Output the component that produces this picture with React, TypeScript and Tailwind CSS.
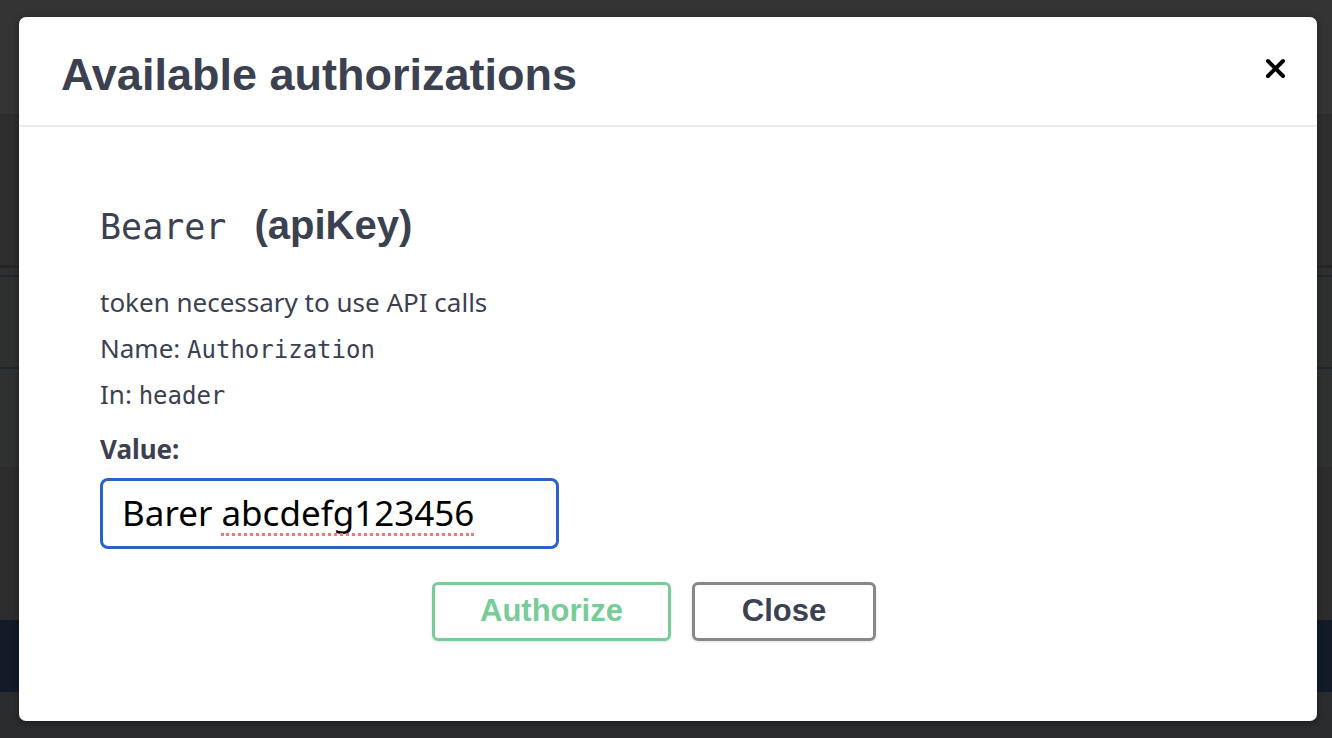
import React from "react";

const mono = { fontFamily: '"DejaVu Sans Mono", monospace' };
const noto = { fontFamily: '"Noto Sans", "Liberation Sans", sans-serif' };

export default function App() {
  return (
    <div className="relative w-[1332px] h-[738px] overflow-hidden bg-[#2d2d2d]" style={{ fontFamily: '"Liberation Sans", Arial, sans-serif' }}>
      {/* faded page behind overlay */}
      <div className="flex flex-col">
        <div className="h-[114px] bg-[#333333]" />
        <div className="h-[1px] bg-[#2a2a2a]" />
        <div className="h-[150px] bg-[#2e2e2e]" />
        <div className="h-[3px] bg-[#262626]" />
        <div className="h-[7px] bg-[#2f2f2f]" />
        <div className="h-[2px] bg-[#1d2836]" />
        <div className="h-[90px] bg-[#2e2f2f]" />
        <div className="h-[2px] bg-[#1d2836]" />
        <div className="h-[98px] bg-[#2f3030]" />
        <div className="h-[1px] bg-[#292929]" />
        <div className="h-[152px] bg-[#2d2d2d]" />
        <div className="h-[72px] bg-[#131b28]" />
        <div className="h-[46px] bg-[#2b2c2d]" />
      </div>

      {/* modal */}
      <div className="absolute left-[19px] top-[17px] w-[1298px] h-[704px] bg-white rounded-[7px] shadow-[0_2px_6px_rgba(0,0,0,0.35)] flex flex-col">
        <div className="h-[110px] flex items-center justify-between pl-[42px] pr-[31px] border-b-2 border-[#ebebeb]">
          <h3 className="text-[45px] font-bold text-[#3b4151] leading-none pt-[6px]">Available authorizations</h3>
          <svg width="21" height="21" viewBox="0 0 21 21" className="mb-[6px]">
            <path d="M3 3 L18 18 M18 3 L3 18" stroke="#000" strokeWidth="4" strokeLinecap="round" />
          </svg>
        </div>
        <div className="flex flex-col pl-[81px] pt-[78px]">
          <h4 className="flex items-baseline text-[#3b4151] leading-none">
            <code className="text-[35px]" style={mono}>Bearer</code>
            <span className="text-[40px] font-bold ml-[28px]">(apiKey)</span>
          </h4>
          <div className="mt-[45px] flex flex-col gap-[22px] text-[26px] text-[#3b4151] leading-[24px]">
            <p className="h-[24px]" style={noto}>token necessary to use API calls</p>
            <p className="h-[24px]">
              <span style={noto}>Name: </span>
              <code className="text-[24px]" style={mono}>Authorization</code>
            </p>
            <p className="h-[24px]">
              <span style={noto}>In: </span>
              <code className="text-[24px]" style={mono}>header</code>
            </p>
            <p className="h-[24px] font-bold mt-[9px]" style={noto}>Value:</p>
          </div>
          <div className="mt-[17px] w-[459px] h-[71px] border-[3px] border-[#2962c9] rounded-[8px] flex items-center pl-[19px] text-[35px] text-black" style={noto}>
            <span className="whitespace-pre">Barer </span>
            <span className="relative">
              abcdefg123456
              <span className="absolute left-0 right-0 bottom-[4px] border-b-[3px] border-dotted border-[#ef7a70]" />
            </span>
          </div>
        </div>
        <div className="flex justify-center gap-[21px] mt-[33px] pr-[28px]">
          <button className="w-[239px] h-[59px] border-[3px] border-[#77cc98] rounded-[6px] text-[31px] font-bold text-[#77cc98] shadow-[0_1px_3px_rgba(0,0,0,0.12)]">Authorize</button>
          <button className="w-[184px] h-[59px] border-[3px] border-[#888888] rounded-[6px] text-[31px] font-bold text-[#3b4151] shadow-[0_1px_3px_rgba(0,0,0,0.12)]">Close</button>
        </div>
      </div>
    </div>
  );
}
